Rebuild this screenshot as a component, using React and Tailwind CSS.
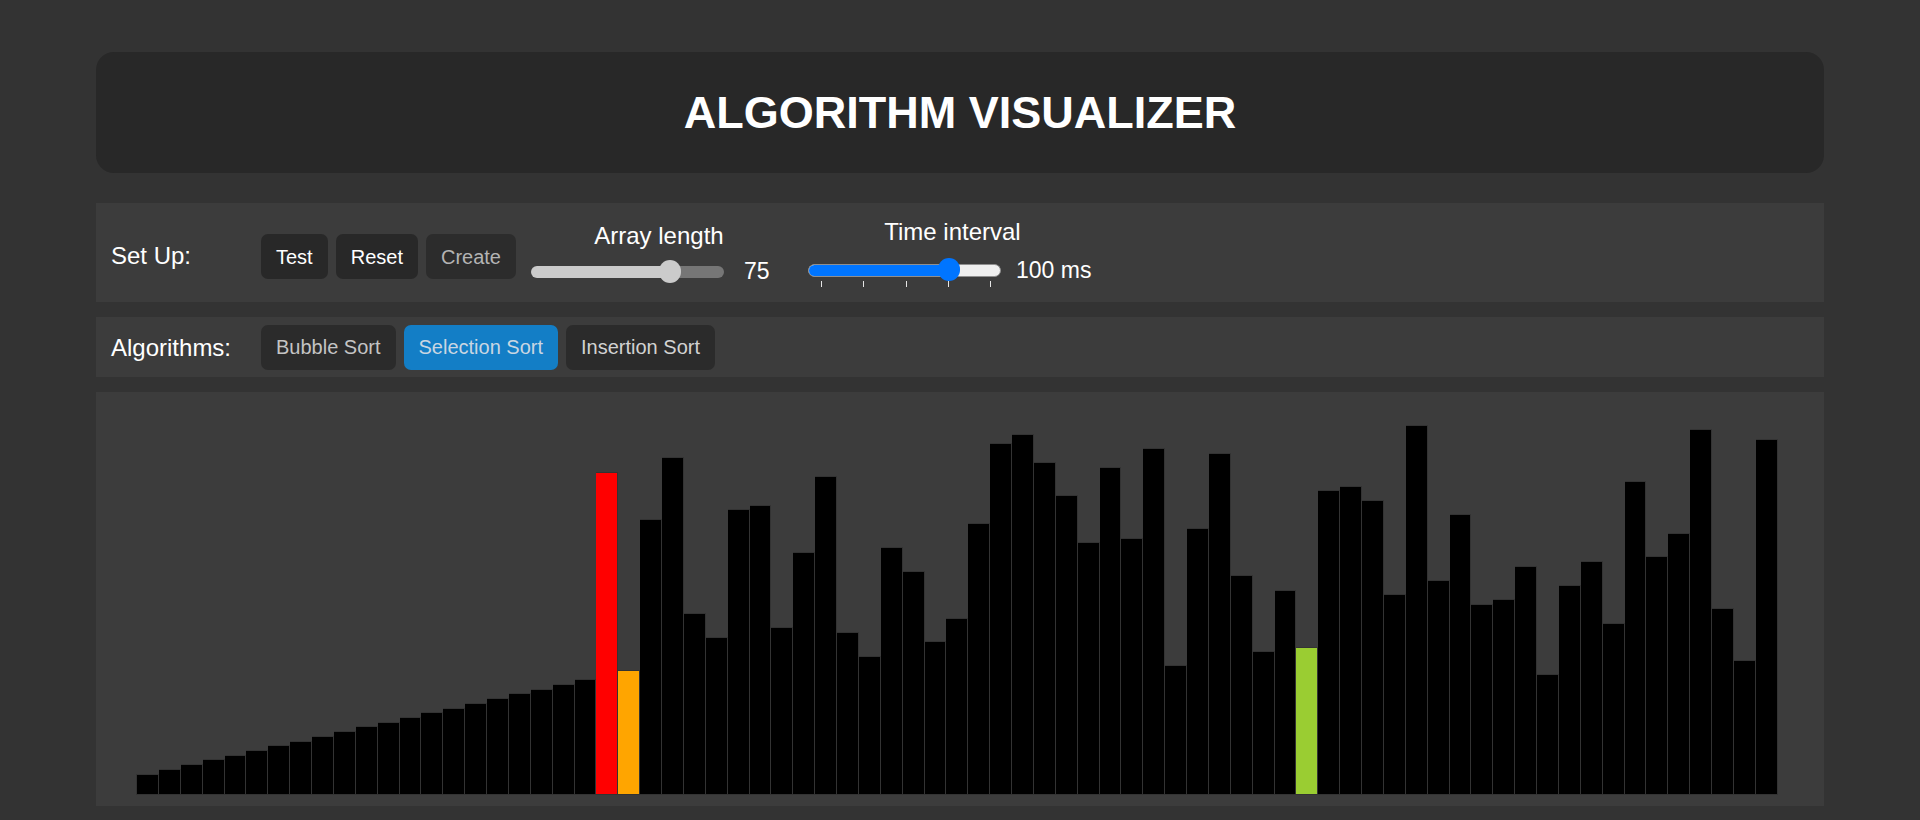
import React from "react";

const HEIGHTS = [
  19.7, 24.7, 29.7, 34.7, 38.7, 43.7, 48.7, 52.7, 57.7, 62.7, 67.7, 71.7, 76.7, 81.7, 85.7,
  90.7, 95.7, 100.7, 104.7, 109.7, 114.7, 322, 123.7, 275, 336.7, 180.7, 156.7, 285, 288.7,
  166.7, 241.7, 317.7, 161.7, 137.7, 247, 222.7, 152.7, 175.7, 270.7, 350.7, 359.7, 331.7,
  298.7, 251.7, 326.7, 255.7, 345.7, 128.7, 265.7, 340.7, 219, 142.7, 203.7, 147.3, 303.7,
  307.7, 293.7, 200, 369.3, 213.7, 279.7, 189.7, 194.7, 227.7, 119.7, 208.7, 232.7, 170.7,
  312.7, 238, 260.7, 364.7, 185.7, 133.7, 355.3,
];

const BAR_COLORS = {
  21: "bg-[#ff0000]",
  22: "bg-[#ffa500]",
  53: "bg-[#9acd32]",
};

const TICKS = [13, 55, 98, 140, 182];

function Btn({ children, className = "text-white bg-[#282828]" }) {
  return (
    <button
      type="button"
      className={`h-[45px] rounded-[7px] px-[15px] text-[20px] leading-none ${className}`}
    >
      {children}
    </button>
  );
}

function LengthSlider() {
  return (
    <div className="relative h-[23px] w-[193px]">
      <div className="absolute left-0 right-0 top-[6px] flex h-[12px] overflow-hidden rounded-full">
        <div className="w-[139px] bg-[#cbcbcb]" />
        <div className="flex-1 bg-[#767676]" />
      </div>
      <div className="absolute left-[128px] top-0 h-[23px] w-[22px] rounded-full bg-[#cbcbcb]" />
    </div>
  );
}

function TimeSlider() {
  return (
    <div className="relative h-[29px] w-[193px]">
      <div className="absolute left-0 right-0 top-[6px] flex h-[13px] overflow-hidden rounded-full border border-[#8f8f8f] bg-[#efefef]">
        <div className="w-[141px] bg-[#0075ff]" />
      </div>
      <div className="absolute left-[130px] top-0 h-[23px] w-[22px] rounded-full bg-[#0075ff]" />
      {TICKS.map((t) => (
        <div
          key={t}
          className="absolute top-[23px] h-[6px] w-px bg-[#e6e6e6]"
          style={{ left: t }}
        />
      ))}
    </div>
  );
}

export default function App() {
  return (
    <div
      className="h-[820px] overflow-hidden bg-[#333333] px-[96px] pt-[52px] text-white"
      style={{ fontFamily: '"Liberation Sans", Arial, sans-serif' }}
    >
      <header className="flex h-[121px] items-center justify-center rounded-[18px] bg-[#282828]">
        <h1 className="text-[45px] font-bold leading-none">ALGORITHM VISUALIZER</h1>
      </header>

      <section className="mt-[30px] flex h-[99px] items-start bg-[#3c3c3c] px-[15px]">
        <div className="mt-[39px] w-[150px] text-[24px] leading-[27px]">Set Up:</div>
        <div className="mt-[31px] flex gap-[8px]">
          <Btn>Test</Btn>
          <Btn>Reset</Btn>
          <Btn className="bg-[#2c2c2c] text-[#b4b4b4]">Create</Btn>
        </div>

        <div className="ml-[15px] mt-[20px] flex w-[256px] flex-col">
          <div className="text-center text-[24px] leading-[26px]">Array length</div>
          <div className="mt-[9px] flex items-center">
            <LengthSlider />
            <span className="ml-[20px] w-[43px] text-[23px] leading-[26px]">75</span>
          </div>
        </div>

        <div className="ml-[21px] mt-[16px] flex w-[289px] flex-col">
          <div className="text-center text-[24px] leading-[26px]">Time interval</div>
          <div className="mt-[13px] flex items-start">
            <TimeSlider />
            <span className="ml-[15px] mt-[-1px] text-[23px] leading-[26px]">100 ms</span>
          </div>
        </div>
      </section>

      <section className="mt-[15px] flex h-[60px] items-center bg-[#3c3c3c] px-[15px]">
        <div className="w-[150px] text-[24px] leading-[27px]">Algorithms:</div>
        <div className="flex gap-[8px]">
          <Btn className="bg-[#2b2b2b] text-[#c4c4c4]">Bubble Sort</Btn>
          <Btn className="bg-[#137ec6] text-[#c9d6e2]">Selection Sort</Btn>
          <Btn className="bg-[#2b2b2b] text-[#d2d2d2]">Insertion Sort</Btn>
        </div>
      </section>

      <section className="mt-[15px] flex h-[414px] items-end bg-[#3c3c3c] pb-[11px] pl-[40px]">
        <div className="flex h-full w-[1642px] items-end">
          {HEIGHTS.map((h, i) => (
            <div
              key={i}
              className={`flex-1 border-b border-r border-t border-[#333333] ${i === 0 ? "border-l" : ""} ${BAR_COLORS[i] || "bg-black"}`}
              style={{ height: h + 1 }}
            />
          ))}
        </div>
      </section>
    </div>
  );
}
